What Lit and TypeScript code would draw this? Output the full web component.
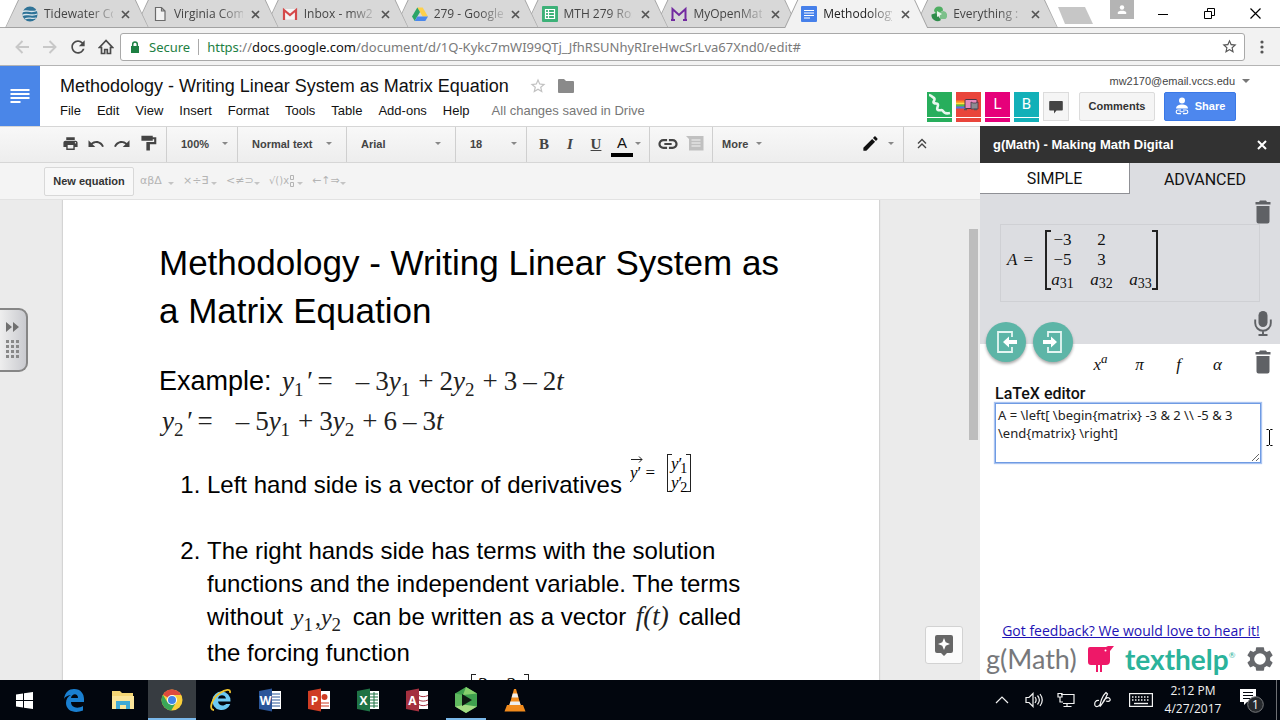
import { LitElement, html, css, svg, type TemplateResult } from "lit";
import { customElement } from "lit/decorators.js";
import { classMap } from "lit/directives/class-map.js";

const icon = (w: number, h: number, box: string, body: unknown) =>
  html`<svg width=${w} height=${h} viewBox=${box} aria-hidden="true">${body}</svg>`;
const glyph = (size: number, d: string, color = "currentColor") =>
  icon(size, size, "0 0 24 24", svg`<path fill=${color} d=${d} />`);

const P = {
  print: "M19 8H5c-1.66 0-3 1.34-3 3v6h4v4h12v-4h4v-6c0-1.66-1.34-3-3-3zm-3 11H8v-5h8v5zm3-7c-.55 0-1-.45-1-1s.45-1 1-1 1 .45 1 1-.45 1-1 1zm-1-9H6v4h12V3z",
  undo: "M12.5 8c-2.65 0-5.05.99-6.9 2.6L2 7v9h9l-3.62-3.62c1.39-1.16 3.16-1.88 5.12-1.88 3.54 0 6.55 2.31 7.6 5.5l2.37-.78C21.08 11.03 17.15 8 12.5 8z",
  redo: "M18.4 10.6C16.55 8.99 14.15 8 11.5 8c-4.65 0-8.58 3.03-9.96 7.22L3.9 16c1.05-3.19 4.05-5.5 7.6-5.5 1.95 0 3.73.72 5.12 1.88L13 16h9V7l-3.6 3.6z",
  paint: "M18 3V1H2v7h16V6h2v4H9v12h5v-9h9V3h-5z",
  link: "M3.9 12c0-1.71 1.39-3.1 3.1-3.1h4V6.5H7a5.5 5.5 0 0 0 0 11h4v-2.4H7c-1.71 0-3.1-1.39-3.1-3.1zM8 13.2h8v-2.4H8v2.4zm9-6.7h-4v2.4h4c1.71 0 3.1 1.39 3.1 3.1s-1.39 3.1-3.1 3.1h-4v2.4h4a5.5 5.5 0 0 0 0-11z",
  edit: "M3 17.25V21h3.75L17.81 9.94l-3.75-3.75L3 17.25zM20.71 7.04c.39-.39.39-1.02 0-1.41l-2.34-2.34c-.39-.39-1.02-.39-1.41 0l-1.83 1.83 3.75 3.75 1.83-1.83z",
  refresh: "M17.65 6.35C16.2 4.9 14.21 4 12 4c-4.42 0-7.99 3.58-7.99 8s3.57 8 7.99 8c3.73 0 6.84-2.55 7.73-6h-2.08c-.82 2.33-3.04 4-5.65 4-3.31 0-6-2.69-6-6s2.69-6 6-6c1.66 0 3.14.69 4.22 1.78L13 11h7V4l-2.35 2.35z",
  star: "M22 9.24l-7.19-.62L12 2 9.19 8.63 2 9.24l5.46 4.73L5.82 21 12 17.27 18.18 21l-1.63-7.03L22 9.24zM12 15.4l-3.76 2.27 1-4.28-3.32-2.88 4.38-.38L12 6.1l1.71 4.04 4.38.38-3.32 2.88 1 4.28L12 15.4z",
  gear: "M20.6 13.1c.05-.36.08-.72.08-1.1s-.03-.74-.08-1.1l2-1.6c.2-.16.25-.43.12-.65l-2-3.4c-.12-.22-.39-.3-.61-.22l-2.4.97a7.7 7.7 0 0 0-1.9-1.1L15.4 2.4c-.03-.24-.24-.4-.48-.4H9.1c-.25 0-.45.17-.49.4l-.36 2.5c-.7.28-1.3.64-1.9 1.1l-2.4-.97c-.22-.08-.48 0-.6.22l-2 3.4c-.13.22-.08.49.12.65l2 1.6a8 8 0 0 0 0 2.2l-2 1.6c-.2.16-.25.43-.12.65l2 3.4c.12.22.38.3.6.22l2.4-.97c.6.46 1.2.82 1.9 1.1l.36 2.5c.04.23.24.4.49.4h5.82c.24 0 .45-.17.48-.4l.4-2.5c.68-.28 1.3-.64 1.88-1.1l2.4.97c.22.08.49 0 .61-.22l2-3.4c.13-.22.08-.49-.12-.65zM12 17a5 5 0 1 1 0-10 5 5 0 0 1 0 10z",
};

const caret = html`<span class="caret"></span>`;
const sidebarTrash = icon(16, 24, "0 0 16 24", svg`<path fill="#5f6165" d="M5 0.5h6l1 1.5h3.5v2.5H.5V2H4zM1.5 6h13v15.500a2 2 0 0 1-2 2h-9a2 2 0 0 1-2-2z"/>`);

interface Tab { title: string; mark: TemplateResult; active?: boolean }

const tabs: Tab[] = [
  { title: "Tidewater Co", mark: icon(16, 16, "0 0 16 16", svg`<circle cx="8" cy="8" r="7.600" fill="#2f7397"/><path d="M0 6c4-3 8 1.500 15-1.500M.5 9.500c4-3 8 1.500 15-1.500M3 13c4-2.500 6 .5 11-1" fill="none" stroke="#d9e4ea" stroke-width="1.300"/>`) },
  { title: "Virginia Com", mark: icon(16, 16, "0 0 16 16", svg`<path d="M3.500 1.500h6l3.500 3.500v9.500H3.500zM9.500 1.500V5H13" fill="#f2f2f2" stroke="#6b6b6b" stroke-width="1.200"/>`) },
  { title: "Inbox - mw2", mark: icon(16, 16, "0 0 16 16", svg`<path d="M1 3h14v10.500H1z" fill="#f4f4f4"/><path d="M2 14V4l6 5 6-5v10" fill="none" stroke="#d5494a" stroke-width="2.200"/>`) },
  { title: "279 - Google", mark: icon(16, 16, "0 0 16 16", svg`<path d="M5.300 1.500h5.400L16 10.500h-5.400z" fill="#fdd04c"/><path d="M5.300 1.500L8 6.100 2.700 15 0 10.500z" fill="#2aa567"/><path d="M5.400 10.500H16L13.300 15H2.700z" fill="#4a87ec"/>`) },
  { title: "MTH 279 Ros", mark: icon(16, 16, "0 0 16 16", svg`<rect width="16" height="16" rx="1" fill="#3db178"/><path d="M3.500 3.500h9v9h-9zM3.500 6.500h9M3.500 9.500h9M6.500 3.500v9" fill="none" stroke="#fff" stroke-width="1.200"/>`) },
  { title: "MyOpenMath", mark: icon(16, 16, "0 0 16 16", svg`<path d="M1.500 14V3L8 9l6.500-6v11M0 14h4M12 14h4" fill="none" stroke="#722aa0" stroke-width="2"/>`) },
  { title: "Methodology", active: true, mark: icon(16, 16, "0 0 16 16", svg`<rect width="16" height="16" rx="1" fill="#4680ea"/><path d="M3 4.500h10M3 7h10M3 9.500h10M3 12h6" stroke="#fff" stroke-width="1.200"/>`) },
  { title: "Everything : F", mark: icon(16, 16, "0 0 16 16", svg`<path d="M8 .5a4 4 0 0 1 4 4L6 8.500 3 5a5 5 0 0 1 5-4.500z" fill="#4fae62"/><path d="M12.500 5a4.500 4.500 0 0 1 2 8L9 13V6z" fill="#7cc08a"/><path d="M.5 8.500L5 7l5 7a6 6 0 0 1-9.500-5.500z" fill="#2f8c4b"/><path d="M6 5l5 3-5 3z" fill="#e9f6ea"/>`) },
];

@customElement("browser-frame")
export class BrowserFrame extends LitElement {
  static styles = css`
    :host { display: block; font: 12px/28px "Open Sans", sans-serif; color: #454545; }
    button { font: inherit; color: inherit; border: 0; background: none; padding: 0; display: grid; place-items: center; }
    .strip { display: flex; height: 28px; background: #fff; padding: 0 2px 0 5px; border-bottom: 1px solid #a9a9a9; box-sizing: border-box; }
    .tabs { display: flex; flex: 1; min-width: 0; height: 28px; padding-right: 14px; isolation: isolate; }
    .tab { position: relative; flex: 1 1 0; min-width: 0; margin-right: -14px; display: flex; align-items: center; padding: 0 16px 0 17px; gap: 6px; z-index: var(--depth); height: 28px; box-sizing: border-box; }
    .tab::before, .tab::after { content: ""; position: absolute; z-index: -1; inset: 0; background: #a2a2a2; clip-path: polygon(13px 0, calc(100% - 13px) 0, 100% 100%, 0 100%); }
    .tab::after { inset: 0 1px 1px; background: #d8d8d8; }
    .tab.active { z-index: 20; color: #222; }
    .tab.active::after { background: #f2f2f2; inset: 0 1px 0; }
    .tab svg { flex: none; }
    .name { flex: 1; min-width: 0; white-space: nowrap; mask-image: linear-gradient(to right, #000 65%, #0003); }
    .close { width: 14px; height: 14px; color: #555; }
    .new { align-self: start; margin-top: 7px; width: 35px; height: 17px; background: #c6c6c6; clip-path: polygon(0 0, 27px 0, 100% 100%, 7px 100%); margin-right: 17px; }
    .profile { width: 24px; height: 19px; background: #b4b4b4; margin-right: 6px; }
    .win { width: 46px; height: 27px; color: #000; }
    .bar { display: flex; align-items: center; height: 38px; box-sizing: border-box; background: #f2f2f2; border-bottom: 1px solid #b4b4b4; padding: 0 9px 0 8px; color: #4b4b4b; }
    .nav { width: 28px; height: 28px; }
    .nav.off { color: #c8c8c8; }
    .url { flex: 1; min-width: 0; display: flex; align-items: center; height: 28px; box-sizing: border-box; background: #fff; border: 1px solid #a9a9a9; border-radius: 3px; font: 13px/26px "Noto Sans", sans-serif; padding: 0 6px 0 9px; white-space: nowrap; color: #7a7a7a; }
    .secure { color: #1d8043; margin-left: 9px; padding-right: 8px; border-right: 1px solid #aaa; line-height: 16px; margin-right: 8px; }
    .addr { flex: 1; }
    .https { color: #1d8043; }
    .host { color: #111; }
    .more { width: 18px; height: 28px; margin-left: 8px; }
  `;
  render() {
    return html`
      <div class="strip">
        <div class="tabs" role="tablist">
          ${tabs.map((t, i) => html`
            <div class=${classMap({ tab: true, active: !!t.active })} role="tab" style="--depth:${tabs.length - i}">
              ${t.mark}<span class="name">${t.title}</span>
              <button class="close" aria-label="Close tab">${icon(9, 9, "0 0 9 9", svg`<path d="M1 1l7 7M8 1L1 8" stroke="currentColor" stroke-width="1.700"/>`)}</button>
            </div>`)}
        </div>
        <button class="new" aria-label="New tab"></button>
        <button class="profile" aria-label="Profile">${icon(10, 10, "0 0 10 10", svg`<circle cx="5" cy="2.500" r="2.200" fill="#fff"/><path d="M.8 9V7.500C.8 5 9.200 5 9.200 7.500V9z" fill="#fff"/>`)}</button>
        <button class="win" aria-label="Minimize">${icon(10, 10, "0 0 10 10", svg`<path d="M0 5.500h10" stroke="#000"/>`)}</button>
        <button class="win" aria-label="Restore">${icon(11, 11, "0 0 11 11", svg`<path d="M.5 3.500h7v7h-7zM3.500 3V.5h7v7H8" fill="none" stroke="#000"/>`)}</button>
        <button class="win" aria-label="Close">${icon(11, 11, "0 0 11 11", svg`<path d="M.5.5l10 10M10.500.5l-10 10" stroke="#000" stroke-width="1.200"/>`)}</button>
      </div>
      <div class="bar">
        <button class="nav off" aria-label="Back">${icon(14, 14, "0 0 14 14", svg`<path d="M14 7H2M7.500 1L1.500 7l6 6" fill="none" stroke="currentColor" stroke-width="1.900"/>`)}</button>
        <button class="nav off" aria-label="Forward">${icon(14, 14, "0 0 14 14", svg`<path d="M0 7h12M6.500 1l6 6-6 6" fill="none" stroke="currentColor" stroke-width="1.900"/>`)}</button>
        <button class="nav" aria-label="Reload">${glyph(20, P.refresh)}</button>
        <button class="nav" aria-label="Home">${icon(16, 16, "0 0 16 16", svg`<path d="M8 1.500L1.500 8.500H3.500V14.500h3.200v-4h2.600v4h3.200V8.500h2z" fill="none" stroke="currentColor" stroke-width="1.700"/>`)}</button>
        <div class="url" role="textbox" aria-label="Address">
          ${icon(10, 12, "0 0 10 12", svg`<path d="M1 5h8v7H1z" fill="#1d8043"/><path d="M2.700 5V3.300a2.300 2.300 0 0 1 4.600 0V5" fill="none" stroke="#1d8043" stroke-width="1.500"/>`)}
          <span class="secure">Secure</span>
          <span class="addr"><span class="https">https</span>://<span class="host">docs.google.com</span>/document/d/1Q-Kykc7mWI99QTj_JfhRSUNhyRIreHwcSrLva67Xnd0/edit#</span>
          ${glyph(17, P.star, "#555")}
        </div>
        <button class="more" aria-label="Menu">${icon(4, 14, "0 0 4 14", svg`<circle cx="2" cy="2" r="1.600" fill="#555"/><circle cx="2" cy="7" r="1.600" fill="#555"/><circle cx="2" cy="12" r="1.600" fill="#555"/>`)}</button>
      </div>`;
  }
}

const menus = ["File", "Edit", "View", "Insert", "Format", "Tools", "Table", "Add-ons", "Help"];

@customElement("docs-header")
export class DocsHeader extends LitElement {
  static styles = css`
    :host { display: flex; height: 60px; background: #fff; font: 13px/16px "Liberation Sans", Arial, sans-serif; color: #111; }
    button { font: inherit; color: inherit; border: 0; background: none; padding: 0; white-space: nowrap; }
    .logo { width: 40px; background: #4a86e8; display: grid; place-items: center; }
    .left { padding: 9px 0 0 20px; flex: 1; min-width: 0; }
    .title { display: flex; align-items: center; height: 22px; gap: 20px; }
    .title h1 { font: 18px/22px "Liberation Sans", Arial, sans-serif; margin: 0; white-space: nowrap; }
    .marks { display: flex; gap: 11px; align-items: center; color: #8a8a8a; }
    .menu { display: flex; gap: 16px; margin-top: 6px; white-space: nowrap; }
    .saved { color: #777; margin-left: 6px; }
    .right { padding: 7px 44px 0 0; font-size: 11px; }
    .mail { display: flex; justify-content: flex-end; align-items: center; gap: 7px; color: #444; margin-right: -14px; height: 16px; }
    .caret { border: 4px solid transparent; border-top-color: #777; border-bottom: 0; }
    .row { display: flex; margin-top: 3px; }
    .who { width: 25px; height: 30px; margin-right: 4px; background: var(--c); color: #fff; display: grid; grid-template-rows: 25px 5px; place-items: center; font: 15px/25px Roboto, sans-serif; }
    .who i { align-self: start; width: 100%; height: 1px; background: #fff; }
    .box { width: 26px; height: 29px; display: grid; place-items: center; background: #f5f5f5; border: 1px solid #dcdcdc; box-sizing: border-box; }
    .comments, .share { height: 29px; font-weight: bold; border: 1px solid #dcdcdc; border-radius: 2px; background: #f5f5f5; color: #333; box-sizing: border-box; width: 76px; margin-left: 10px; padding-bottom: 2px; }
    .share { width: 72px; margin-left: 9px; background: #4d87ee; border-color: #3a78e6; color: #fff; display: flex; align-items: center; justify-content: center; gap: 6px; }
  `;
  render() {
    return html`
      <button class="logo" aria-label="Docs home">${icon(20, 16, "0 0 20 16", svg`<path d="M.5 2h19M.5 6h19M.5 10h19M.5 14h10" stroke="#fff" stroke-width="2"/>`)}</button>
      <div class="left">
        <div class="title"><h1>Methodology - Writing Linear System as Matrix Equation</h1>
          <div class="marks">${glyph(18, P.star, "#c2c2c2")}${icon(16, 14, "0 0 16 14", svg`<path fill="#8a8a8a" d="M1 0h5l2 2h7a1 1 0 0 1 1 1v10a1 1 0 0 1-1 1H1a1 1 0 0 1-1-1V1a1 1 0 0 1 1-1z"/>`)}</div>
        </div>
        <div class="menu">${menus.map((m) => html`<button>${m}</button>`)}<span class="saved">All changes saved in Drive</span></div>
      </div>
      <div class="right">
        <div class="mail">mw2170@email.vccs.edu<span class="caret"></span></div>
        <div class="row">
          <span class="who" style="--c:#27ae5c">${icon(25, 25, "0 0 25 25", svg`<path d="M2 3c2 0 3 2 5 3 2 2-2 4 0 5s4 0 4 2-2 4 0 5 4-1 5 1 3 3 7 2" fill="none" stroke="#e9f7ee" stroke-width="2.600"/>`)}<i></i></span>
          <span class="who" style="--c:#e9453b">${icon(25, 25, "0 0 25 25", svg`<path d="M0 9.500h9" stroke="#ff8a1f" stroke-width="2"/><path d="M0 11.500h9" stroke="#ffe23d" stroke-width="2"/><path d="M0 13.500h9" stroke="#49c944" stroke-width="2"/><path d="M0 15.500h9" stroke="#4b78e8" stroke-width="2"/><rect x="9" y="7.500" width="12" height="9" rx="1" fill="#e58bbd" stroke="#4c3546"/><path d="M15 10l2 1h3l2-1v7h-7z" fill="#8b8b92" stroke="#4c3546" stroke-width=".8"/><path d="M8 17.500h3M18 17.500h3" stroke="#555" stroke-width="1.500"/>`)}<i></i></span>
          <span class="who" style="--c:#e6007a">L<i></i></span>
          <span class="who" style="--c:#12b0b8">B<i></i></span>
          <button class="box" aria-label="Chat">${icon(14, 14, "0 0 14 14", svg`<path fill="#444" d="M1 1h12a.8.8 0 0 1 .8.8v8a.8.8 0 0 1-.8.8H7.500L5 13.500V10.600H1a.8.8 0 0 1-.8-.8v-8A.8.8 0 0 1 1 1z"/>`)}</button>
          <button class="comments">Comments</button>
          <button class="share">${icon(14, 18, "0 0 14 18", svg`<circle cx="7" cy="3.500" r="3" fill="#fff"/><path d="M1 11.500c0-5.500 12-5.500 12 0z" fill="#fff"/><path d="M6 13H3a1.800 1.800 0 0 0 0 3.600h3M8 13h3a1.800 1.800 0 0 1 0 3.600H8M4.500 14.800h5" fill="none" stroke="#fff" stroke-width="1.100"/>`)}Share</button>
        </div>
      </div>`;
  }
}

@customElement("docs-toolbar")
export class DocsToolbar extends LitElement {
  static styles = css`
    :host { display: block; font: bold 11px/16px "Liberation Sans", Arial, sans-serif; color: #444; }
    button { font: inherit; color: inherit; border: 0; background: none; padding: 0; display: grid; place-items: center; }
    .bar { display: flex; height: 37px; box-sizing: border-box; border: solid #d6d6d6; border-width: 1px 0; background: linear-gradient(#f8f8f8, #ededed); }
    .group { display: flex; align-items: center; padding: 0 4px 2px; border-left: 1px solid #cfcfcf; box-sizing: border-box; }
    .first { border: 0; padding: 0 5px 2px 57px; }
    .tool { width: 26px; height: 28px; }
    .wide { width: 27px; }
    .caret { border: 3px solid transparent; border-top-color: #888; border-bottom: 0; width: 0; height: 0; }
    .color { padding-right: 8px; }
    .pick { display: grid; align-items: center; width: 109px; box-sizing: border-box; border-left: 1px solid #cfcfcf; padding-bottom: 2px; }
    .pick.short { width: 71px; }
    .pick select { grid-area: 1 / 1; appearance: none; font: inherit; color: inherit; border: 0; background: none; height: 28px; padding: 0 0 0 14px; min-width: 0; }
    .pick .caret { grid-area: 1 / 1; justify-self: end; margin-right: 14px; pointer-events: none; }
    .pick.short .caret { margin-right: 9px; }
    .b { font: bold 15px/18px "Liberation Serif", serif; }
    .i { font-style: italic; }
    .u { text-decoration: underline; }
    .a { font: 15px/17px "Liberation Sans", sans-serif; color: #111; }
    .a span { border-bottom: 4px solid #000; width: 22px; height: 19px; line-height: 17px; margin-top: 3px; }
    .more { display: flex; gap: 8px; padding: 0 5px; align-items: center; }
    .push { margin-left: auto; border: 0; gap: 8px; padding-right: 9px; }
    .fold { width: 77px; padding-left: 5px; }
    .eq { display: flex; align-items: center; height: 37px; box-sizing: border-box; padding-left: 44px; background: #f4f4f4; border-bottom: 1px solid #e2e2e2; color: #b4b4b4; font: 11px/16px "DejaVu Sans", sans-serif; }
    .eq .caret { border-top-color: #c4c4c4; }
    .neweq { font: bold 11px/16px "Liberation Sans", Arial, sans-serif; color: #333; width: 90px; height: 29px; border: 1px solid #d8d8d8; background: #f8f8f8; border-radius: 2px; margin-right: 6px; }
    .sym { width: 43px; display: flex; align-items: center; justify-content: space-between; padding-right: 9px; box-sizing: border-box; white-space: nowrap; }
    .sym .caret { margin-top: 4px; }
    .roots { padding: 0 9px 0 0; font-size: 10px; }
    .roots svg { margin-right: 2px; }
  `;
  pick(label: string, value: string, short = false) {
    return html`<label class=${classMap({ pick: true, short })}><select aria-label=${label}><option>${value}</option></select>${caret}</label>`;
  }
  render() {
    return html`
      <div class="bar">
        <div class="group first">
          <button class="tool" aria-label="Print">${glyph(17, P.print)}</button>
          <button class="tool" aria-label="Undo">${glyph(18, P.undo)}</button>
          <button class="tool" aria-label="Redo">${glyph(18, P.redo)}</button>
          <button class="tool" aria-label="Paint format">${glyph(17, P.paint)}</button>
        </div>
        ${this.pick("Zoom", "100%", true)}${this.pick("Styles", "Normal text")}${this.pick("Font", "Arial")}${this.pick("Font size", "18", true)}
        <div class="group color">
          <button class="tool b">B</button><button class="tool b i">I</button><button class="tool b u">U</button>
          <button class="tool a" aria-label="Text color"><span>A</span></button>${caret}
        </div>
        <div class="group">
          <button class="tool wide" aria-label="Insert link">${glyph(22, P.link)}</button>
          <button class="tool wide" aria-label="Add comment">${icon(18, 15, "0 0 18 15", svg`<path fill="#c0c0c0" d="M0 0h17.500v14.500H3V3z"/><path d="M5.500 4h9M5.500 7h9M5.500 10h9" stroke="#f4f4f4" stroke-width="1.200"/>`)}</button>
        </div>
        <div class="group"><button class="more">More ${caret}</button></div>
        <div class="group push"><button aria-label="Editing mode">${glyph(19, P.edit, "#111")}</button>${caret}</div>
        <div class="group fold"><button class="tool" aria-label="Hide menus">${icon(10, 11, "0 0 10 11", svg`<path d="M1 5.500l4-4 4 4M1 10l4-4 4 4" fill="none" stroke="#444" stroke-width="1.400"/>`)}</button></div>
      </div>
      <div class="eq">
        <button class="neweq">New equation</button>
        ${["αβΔ", "×÷∃", "<≠⊃"].map((s) => html`<button class="sym">${s}${caret}</button>`)}
        <button class="sym roots">√()x${icon(4, 12, "0 0 4 12", svg`<path d="M.5.5h3v4h-3zM.5 7.500h3v4h-3z" fill="none" stroke="#b4b4b4"/>`)}${caret}</button>
        <button class="sym">←↑⇒${caret}</button>
      </div>`;
  }
}

@customElement("docs-page")
export class DocsPage extends LitElement {
  static styles = css`
    :host { flex: 1; min-height: 0; display: flex; position: relative; background: #ebebeb; overflow: hidden; color: #000; font: 24px/33px "Liberation Sans", Arial, sans-serif; }
    .paper { flex: 0 0 816px; margin-left: 63px; padding: 39px 90px 0 96px; box-sizing: border-box; background: #fff; box-shadow: 0 0 1px 1px #d4d4d4; }
    h2 { font: 35px/48px "Liberation Sans", Arial, sans-serif; margin: 0 0 26px; }
    p { font-size: 27px; line-height: 40px; margin: 0; }
    ol { margin: 12px 0 0; padding-left: 48px; }
    li { margin-bottom: 33px; }
    .m { display: inline-block; font-family: "Liberation Serif", "Times New Roman", serif; white-space: nowrap; margin: 0 3px; color: #222; }
    .m i { font-style: italic; }
    .m sub { font-size: 19px; line-height: 0; vertical-align: -6px; margin-right: 2px; }
    .op { margin: 0 6px; }
    .lead { margin-left: 17px; }
    .low { margin-bottom: 2px; }
    .fn { font-size: 27px; }
    .vec { display: inline-block; overflow: hidden; height: 40px; margin-left: 8px; font: 17px/20px "Liberation Serif", serif; }
    .in { display: flex; align-items: center; height: 40px; gap: 12px; }
    .arrow { display: grid; justify-items: center; grid-template-rows: 8px 20px; margin-bottom: 8px; }
    .arrow svg { margin-right: 10px; }
    .mat { display: grid; padding: 0 3px; height: 38px; align-content: center; border: solid #222; border-width: 0 1px; line-height: 19px; background: linear-gradient(#222, #222) 0 0 / 4px 1px no-repeat, linear-gradient(#222, #222) 100% 0 / 4px 1px no-repeat, linear-gradient(#222, #222) 0 100% / 4px 1px no-repeat, linear-gradient(#222, #222) 100% 100% / 4px 1px no-repeat; }
    .mat sub { font-size: 14px; line-height: 0; vertical-align: -4px; margin-left: -2px; }
    .forcing { width: 58px; box-sizing: border-box; margin: 5px 0 0 264px; height: 46px; font: 20px/23px "Liberation Serif", serif; white-space: nowrap; padding: 0 6px; }
    .row { display: flex; justify-content: space-between; }
    .thumb { position: absolute; top: 29px; right: 2px; width: 9px; height: 211px; background: #bdbdbd; }
    .handle { position: absolute; left: 0; top: 108px; width: 28px; height: 64px; box-sizing: border-box; padding: 0 3px 0 0; border: 2px solid #868686; border-left: 0; border-radius: 0 9px 9px 0; background: linear-gradient(90deg, #eee, #c9cacf); display: grid; place-items: center; }
    .explore { position: absolute; right: 17px; bottom: 16px; width: 38px; height: 38px; padding: 0; background: #fbfbfb; border: 1px solid #d2d2d2; border-radius: 3px; display: grid; place-items: center; }
  `;
  render() {
    const y = (n: number) => html`<i>y</i><sub>${n}</sub>`;
    const op = (s: string) => html`<span class="op">${s}</span>`;
    const line = (l: number, a: number, b: number, c: number, d: number) =>
      html`<span class="m">${y(l)}<i>′</i>${op("=")}<span class="op lead">–</span>${a}${y(1)}${op("+")}${b}${y(2)}${op("+")}${c}${op("–")}${d}<i>t</i></span>`;
    return html`
      <div class="paper">
        <h2>Methodology - Writing Linear System as a Matrix Equation</h2>
        <p>Example: ${line(1, 3, 2, 3, 2)}</p>
        <p>${line(2, 5, 3, 6, 3)}</p>
        <ol>
          <li>Left hand side is a vector of derivatives<span class="vec"><span class="in"><span class="arrow">${icon(12, 8, "0 0 12 8", svg`<path d="M0 4.500h11M8 1.500l3 3-3 3" fill="none" stroke="#222"/>`)}<span><i>y</i>′ =</span></span><span class="mat"><span><i>y</i>′<sub>1</sub></span><span><i>y</i>′<sub>2</sub></span></span></span></span></li>
          <li>The right hands side has terms with the solution functions and the independent variable. The terms<br>without <span class="m low">${y(1)},${y(2)}</span> can be written as a vector <span class="m fn"><i>f(t)</i></span> called<br>the forcing function
            <div class="mat forcing"><span class="row"><span>3</span><span>−</span><span>2<i>t</i></span></span><span class="row"><span>6</span><span>−</span><span>3<i>t</i></span></span></div>
          </li>
        </ol>
      </div>
      <div class="thumb"></div>
      <button class="handle" aria-label="Open panel">${icon(14, 40, "0 0 14 40", svg`<path d="M1 2l6 5-6 5zM8 2l6 5-6 5z" fill="#707070"/>${[0, 1, 2, 3].map((r) => [0, 1, 2].map((c) => svg`<rect x=${1 + c * 5} y=${20 + r * 5} width="3" height="3" fill="#888"/>`))}`)}</button>
      <button class="explore" aria-label="Explore">${icon(18, 21, "0 0 18 21", svg`<path fill="#666" d="M2 0h14a2 2 0 0 1 2 2v14a2 2 0 0 1-2 2h-4l-3 3-3-3H2a2 2 0 0 1-2-2V2a2 2 0 0 1 2-2z"/><path fill="#fff" d="M9 3l1.700 4.300L15 9l-4.300 1.700L9 15l-1.700-4.300L3 9l4.300-1.700z"/>`)}</button>`;
  }
}

@customElement("gmath-panel")
export class GmathPanel extends LitElement {
  static styles = css`
    :host { display: flex; flex-direction: column; width: 300px; flex: none; background: #fff; position: relative; color: #111; font: 16px/20px Roboto, sans-serif; }
    button { font: inherit; color: inherit; border: 0; background: none; padding: 0; display: grid; place-items: center; }
    header { display: flex; align-items: center; justify-content: space-between; height: 37px; box-sizing: border-box; padding: 0 13px; background: #323232; color: #fff; font: bold 13px/16px "Liberation Sans", Arial, sans-serif; }
    .tabs { display: grid; grid-template-columns: 1fr 1fr; height: 31px; background: #dcdde1; }
    .tabs button { padding-top: 2px; }
    .tabs .on { background: #fff; border: solid #8f9095; border-width: 0 1px 1px 0; }
    .view { display: grid; grid-template-columns: 1fr 20px; background: #dcdde1; height: 150px; padding: 6px 7px 0 20px; box-sizing: border-box; }
    .side { display: flex; flex-direction: column; justify-content: space-between; align-items: center; padding-bottom: 8px; width: 16px; justify-self: end; margin-right: 2px; }
    .side svg { flex: none; }
    .formula { margin-top: 24px; height: 78px; border: 1px solid #cfd0d4; box-sizing: border-box; display: flex; align-items: center; padding: 0 0 6px 6px; margin-right: -7px; gap: 12px; font: 17px/20px "Liberation Serif", serif; width: 260px; word-spacing: normal; }
    .lhs { display: flex; gap: 6px; }
    .mat { display: grid; grid-template-columns: repeat(3, 39px); justify-items: center; align-content: center; height: 60px; width: 113px; box-sizing: border-box; border: solid #222; border-width: 0 2px; background: linear-gradient(#222, #222) 0 0 / 4px 2px no-repeat, linear-gradient(#222, #222) 100% 0 / 4px 2px no-repeat, linear-gradient(#222, #222) 0 100% / 4px 2px no-repeat, linear-gradient(#222, #222) 100% 100% / 4px 2px no-repeat; justify-content: center; }
    .mat sub { font-size: 14px; line-height: 0; vertical-align: -3px; }
    .round { position: absolute; top: 196px; left: 6px; display: flex; gap: 7px; }
    .round button { width: 40px; height: 40px; border-radius: 50%; background: #5db5a7; box-shadow: 0 2px 3px #0005; }
    .cats { display: flex; align-items: center; height: 41px; padding: 0 9px 0 101px; font: italic 17px/20px "Liberation Serif", serif; }
    .cats button { width: 39px; height: 28px; }
    .cats button:last-child { width: 16px; margin: 0 0 6px auto; }
    .cats sup { font-size: 13px; line-height: 0; }
    .editor { display: grid; padding: 0 19px 0 15px; font-weight: 500; line-height: 18px; }
    textarea { margin: 0; height: 60px; box-sizing: border-box; border: 1px solid #6f9be3; box-shadow: 0 0 1px 1px #a9c3f0; outline: 0; padding: 2px 2px; font: 13px/18px "Noto Sans", sans-serif; color: #222; resize: both; }
    footer { margin-top: auto; display: grid; padding: 0 6px 3px; }
    a { font: 14px/20px "Open Sans", sans-serif; color: #1d12b4; justify-self: center; white-space: nowrap; margin-left: 2px; }
    .brand { display: flex; align-items: center; height: 36px; justify-content: space-between; }
    .g { font: 27px/32px Lato, sans-serif; color: #77787b; }
    .th { font: bold 28px/30px Lato, sans-serif; color: #2bb39b; display: flex; }
    .th small { font: 8px/22px Lato, sans-serif; }
    .beam { position: absolute; right: 7px; top: 303px; }
  `;
  render() {
    const a = (n: number) => html`<span><i>a</i><sub>${n}</sub></span>`;
    const door = (flip: boolean) => icon(24, 24, "0 0 24 24", flip
      ? svg`<path d="M7 7V2h13v20H7v-5" fill="none" stroke="#e5f5f2" stroke-width="1.800"/><path d="M2 10h8V6.500l6 5.500-6 5.500V14H2z" fill="#fff"/>`
      : svg`<path d="M18 7V2H4v20h14v-5" fill="none" stroke="#e5f5f2" stroke-width="1.800"/><path d="M23 10h-8V6.500L9 12l6 5.500V14h8z" fill="#fff"/>`);
    return html`
      <header>g(Math) - Making Math Digital<button aria-label="Close panel">${icon(10, 10, "0 0 10 10", svg`<path d="M1 1l8 8M9 1L1 9" stroke="#fff" stroke-width="2"/>`)}</button></header>
      <div class="tabs"><button class="on">SIMPLE</button><button>ADVANCED</button></div>
      <div class="view">
        <div class="formula"><span class="lhs"><i>A</i><span>=</span></span>
          <div class="mat"><span>−3</span><span>2</span><span></span><span>−5</span><span>3</span><span></span>${a(31)}${a(32)}${a(33)}</div>
        </div>
        <div class="side">${sidebarTrash}${icon(18, 25, "0 0 18 25", svg`<rect x="4.500" y="0" width="9" height="16" rx="4.500" fill="#5f6165"/><path d="M1.200 8.500v3.500a7.800 7.800 0 0 0 15.600 0V8.500M9 20v3.500M4.500 24h9" fill="none" stroke="#5f6165" stroke-width="1.900"/>`)}</div>
      </div>
      <div class="round"><button aria-label="Import from document">${door(false)}</button><button aria-label="Insert in document">${door(true)}</button></div>
      <div class="cats">
        <button><span>x<sup>a</sup></span></button><button>π</button><button>f</button><button>α</button>
        <button aria-label="Clear">${sidebarTrash}</button>
      </div>
      <div class="editor"><label for="latex">LaTeX editor</label>
        <textarea id="latex" spellcheck="false" .value=${"A = \\left[ \\begin{matrix} -3 & 2 \\\\ -5 & 3\n\\end{matrix} \\right]"}></textarea>
      </div>
      <svg class="beam" width="7" height="17" viewBox="0 0 7 17"><path d="M.5.500h2l1 1 1-1h2M3.500 1v15M.5 16.500h2l1-1 1 1h2" fill="none" stroke="#000"/></svg>
      <footer><a href="#feedback">Got feedback? We would love to hear it!</a>
        <div class="brand"><span class="g">g(Math)</span>
          ${icon(27, 28, "0 0 27 28", svg`<path fill="#ee1868" d="M3 2h16l2-1h6l-4 5v10a4 4 0 0 1-4 4h-4v7h-2v-7h-2v7H9v-7H4a3 3 0 0 1-3-3V4a2 2 0 0 1 2-2z"/><circle cx="18.500" cy="5.500" r="1" fill="#fff"/>`)}
          <span class="th">texthelp<small>®</small></span>
          <button aria-label="Settings">${glyph(28, P.gear, "#66686c")}</button>
        </div>
      </footer>`;
  }
}

const office = (color: string, letter: string, sheet: unknown) =>
  icon(24, 24, "0 0 24 24", svg`<rect x="12" y="3" width="11" height="18" fill="#fff"/>${sheet}<path d="M1 3l13-2.500v23L1 21z" fill=${color}/><text x="7.500" y="16.500" text-anchor="middle" font-family="Open Sans" font-weight="bold" font-size="12" fill="#fff">${letter}</text>`);

const apps: { label: string; mark: TemplateResult; state?: string }[] = [
  { label: "Edge", mark: icon(22, 24, "0 0 22 24", svg`<path fill="#1a7fd0" d="M1 11C2 4 6 1 11 1c7 0 10 5 10 10v3H8c0 6 7 7 12 4v4.500C12 26 3 23 3 15c0-4 2-6.500 5-8-4 .5-6 2-7 4zm7-1h7c0-5-6-5-7 0z"/>`) },
  { label: "File Explorer", mark: icon(22, 20, "0 0 22 20", svg`<path d="M0 1h8l2 2h11v16H0z" fill="#f4d675"/><path d="M0 6h22v13H0z" fill="#fbe59a"/><path d="M4 19v-8h14v8h-4v-4H8v4z" fill="#3fa9d6"/>`) },
  { label: "Chrome", state: "current", mark: icon(22, 22, "0 0 22 22", svg`<circle cx="11" cy="11" r="10.500" fill="#f9cf3b"/><path d="M11 11L1.900 5.700A10.500 10.500 0 0 1 20.200 6H11z" fill="#dd4b3e"/><path d="M11 11L6.600 13.500 1.900 5.700a10.500 10.500 0 0 0 8.300 15.700L15 13.500z" fill="#3aa757"/><circle cx="11" cy="11" r="5" fill="#fff"/><circle cx="11" cy="11" r="4" fill="#4285e6"/>`) },
  { label: "Internet Explorer", mark: icon(24, 24, "0 0 24 24", svg`<path fill="#6cc9f2" d="M12.500 3.500a9 9 0 0 1 9 10H9c.5 4.500 6 5 8 2.500h4.300A9.300 9.300 0 1 1 12.500 3.500zM9 10.500h8c-.5-4.500-7.500-4.500-8 0z"/><path d="M5 22C-1 22 3 10 11 5c5-3.500 11-5 10 0" fill="none" stroke="#efc32c" stroke-width="1.800"/>`) },
  { label: "Word", mark: office("#2b569a", "W", svg`<path d="M14 6h8M14 9h8M14 12h8M14 15h8M14 18h8" stroke="#2b569a"/>`) },
  { label: "PowerPoint", mark: office("#cf3d24", "P", svg`<circle cx="17.500" cy="9" r="3" fill="#cf3d24"/><path d="M14 15h8M14 18h8" stroke="#cf3d24"/>`) },
  { label: "Excel", mark: office("#1f7345", "X", svg`<path d="M14 6h8M14 9h8M14 12h8M14 15h8M14 18h8M18 4v16" stroke="#1f7345"/>`) },
  { label: "Access", mark: office("#a4303f", "A", svg`<path d="M14 7.500c2 1.500 6 1.500 9 0M14 12c2 1.500 6 1.500 9 0M14 16.500c2 1.500 6 1.500 9 0" fill="none" stroke="#a4303f"/>`) },
  { label: "Camtasia", state: "open", mark: icon(24, 26, "0 0 24 26", svg`<path d="M12 0l11 6.500v13L12 26 1 19.500v-13z" fill="#3fa04e"/><path d="M12 0l11 6.500L9 8z" fill="#86d06d"/><path d="M1 19.500L12 26l11-6.500-14-2z" fill="#a3dc84"/><path d="M1 6.500L9 8v10l-8 1.500z" fill="#5fb95f"/><path d="M8 7l10 6-10 6z" fill="#0d1a12"/>`) },
  { label: "VLC", mark: icon(22, 24, "0 0 22 24", svg`<path d="M3 17h16l2.500 6.500H.5z" fill="#f08a1c"/><path d="M10 1h2l5 17.500c-2 2-10 2-12 0z" fill="#f28c1e"/><path d="M8.800 5.500h4.400l1.200 4H7.600zM6.400 13.500h9.200l1 3.500H5.400z" fill="#eee"/>`) },
];

@customElement("task-bar")
export class TaskBar extends LitElement {
  static styles = css`
    :host { display: flex; height: 40px; flex: none; background: #02060e; color: #f2f2f2; font: 12px/18px "Open Sans", sans-serif; }
    button { font: inherit; color: inherit; border: 0; background: none; padding: 0; display: grid; place-items: center; }
    .start { width: 50px; padding-right: 2px; }
    .app { width: 48px; height: 40px; margin-right: 1px; box-sizing: border-box; }
    .current { background: #373c41; box-shadow: inset 0 -2px #7ab8ea; }
    .open { background: linear-gradient(#7ab8ea, #7ab8ea) center bottom / 40px 2px no-repeat; }
    .tray { margin-left: auto; display: flex; align-items: center; }
    .t { width: 32px; height: 40px; }
    .t.w { width: 39px; }
    .clock { width: 66px; display: grid; text-align: center; }
    .note { width: 50px; height: 40px; }
    .edge { width: 3px; height: 40px; border-left: 1px solid #6d6f73; }
  `;
  render() {
    const s = (d: string, w = 18, h = 18) => icon(w, h, `0 0 ${w} ${h}`, svg`<path d=${d} fill="none" stroke="#f2f2f2" stroke-width="1.200"/>`);
    return html`
      <button class="start" aria-label="Start">${icon(17, 17, "0 0 17 17", svg`<path fill="#fff" d="M0 2.500l7-1V8H0zM8 1.300L17 0v8H8zM0 9h7v6.500l-7-1zM8 9h9v8l-9-1.300z"/>`)}</button>
      ${apps.map((a) => html`<button class=${classMap({ app: true, current: a.state === "current", open: a.state === "open" })} aria-label=${a.label}>${a.mark}</button>`)}
      <div class="tray">
        <button class="t" aria-label="Hidden icons">${s("M1 9l6-6 6 6", 14, 12)}</button>
        <button class="t" aria-label="Volume">${s("M1 6.500h3l4-4v13l-4-4H1zM10 6c1.500 2 1.500 4 0 6M12.500 4.500c2.500 3 2.500 6 0 9M15 3c3 4 3 8 0 12")}</button>
        <button class="t" aria-label="Network">${s("M4 3.500h13v9H6M10 12.500v3M6.500 15.500h8M1 2.500h4v3.500H1zM3 6v5h3")}</button>
        <button class="t w" aria-label="Ink">${s("M6 9.500c-3-.5-5 2-4 5 1 2 4 1 5-1M7 15.500C7 12 9 5 13 1.500l1.500 1.500C13 7 11 11 7 15.500M10 11c2-5 6-5 7-3s-2 3-4 2")}</button>
        <button class="t w" aria-label="Touch keyboard">${icon(24, 14, "0 0 24 14", svg`<rect x=".6" y=".6" width="22.800" height="12.800" fill="none" stroke="#f2f2f2" stroke-width="1.200"/><path d="M3 4h18M3 7h18" stroke="#f2f2f2" stroke-width="1.400" stroke-dasharray="1.500 1.500"/><path d="M5 10.500h14" stroke="#f2f2f2" stroke-width="1.400"/>`)}</button>
        <div class="clock"><span>2:12 PM</span><span>4/27/2017</span></div>
        <button class="note" aria-label="Notifications">${icon(26, 26, "0 0 26 26", svg`<path d="M2 2h16v13H9l-3 3v-3H2z" fill="#fff"/><path d="M5 5.500h10M5 8.500h10M5 11.500h7" stroke="#02060e"/><circle cx="17.500" cy="17.500" r="7.800" fill="#26292d" stroke="#77797c"/><text x="17.500" y="22" text-anchor="middle" font-family="Open Sans" font-size="12" fill="#fff">1</text>`)}</button>
        <div class="edge"></div>
      </div>`;
  }
}

@customElement("app-root")
export class AppRoot extends LitElement {
  static styles = css`
    :host { display: flex; flex-direction: column; height: 100vh; overflow: hidden; background: #fff; }
    .work { flex: 1; min-height: 0; display: flex; }
    .doc { flex: 1; min-width: 0; display: flex; flex-direction: column; }
  `;
  render() {
    return html`
      <browser-frame></browser-frame>
      <docs-header></docs-header>
      <div class="work">
        <div class="doc"><docs-toolbar></docs-toolbar><docs-page></docs-page></div>
        <gmath-panel></gmath-panel>
      </div>
      <task-bar></task-bar>`;
  }
}
